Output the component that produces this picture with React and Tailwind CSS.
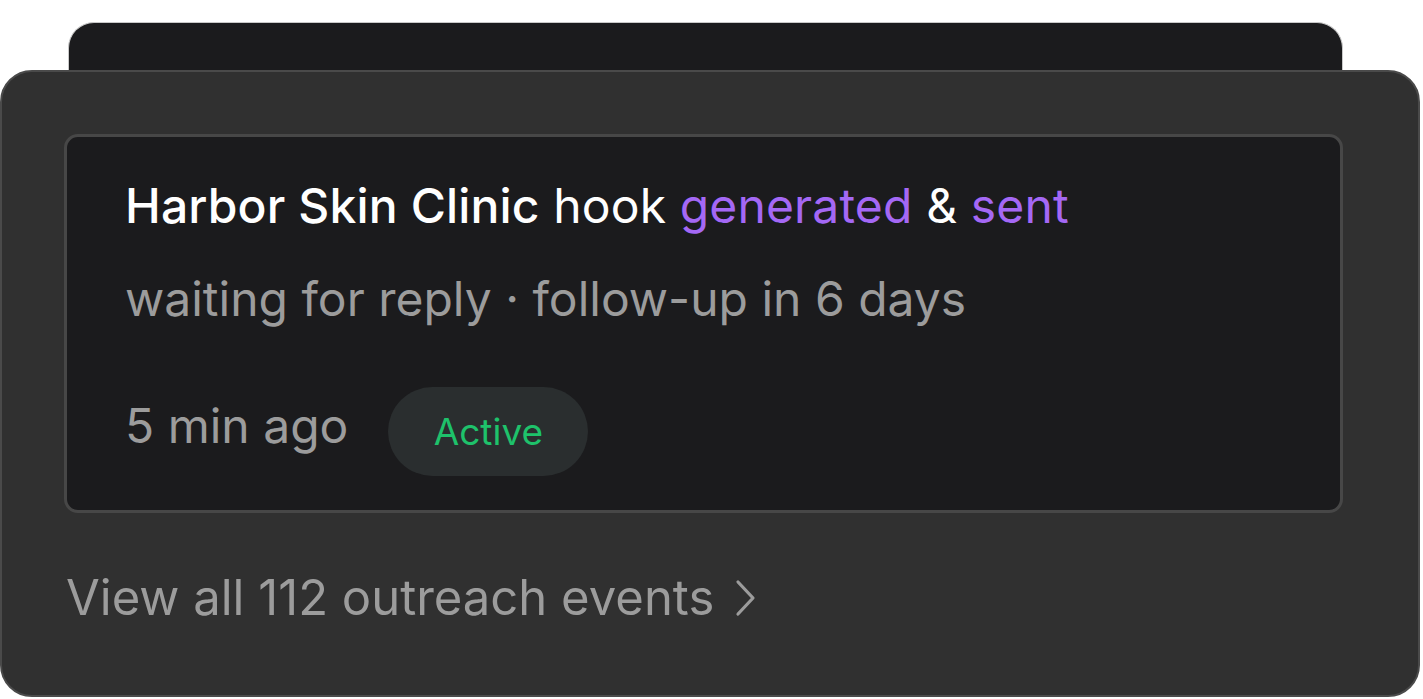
export default function App() {
    return (
        <div className="min-h-screen w-[1423px] bg-white pt-[22px] font-['Inter','Liberation_Sans',sans-serif]">
            <div className="ml-[68px] h-[48px] w-[1275px] rounded-t-[26px] border border-b-0 border-[#c9c9c9] bg-[#1b1b1d]" />

            <div className="h-[627px] w-[1420px] rounded-[32px] border-2 border-[#4a4a4a] bg-[#303030] px-[62px] pt-[62px]">
                <div className="h-[379px] w-[1279px] rounded-[14px] border-[3px] border-[#474747] bg-[#1b1b1d] pl-[58px] pt-[40px]">
                    <p className="text-[48px] leading-[58px] tracking-[0.003em] text-white">
                        <span className="font-medium">Harbor Skin Clinic</span> hook{" "}
                        <span className="text-[#a468f5]">generated</span> &amp;{" "}
                        <span className="text-[#a468f5]">sent</span>
                    </p>
                    <p className="mt-[35px] text-[48px] leading-[58px] text-[#9c9c9c]">
                        waiting for reply · follow-up in 6 days
                    </p>
                    <div className="mt-[59px] flex items-start gap-[40px]">
                        <span className="mt-[10px] text-[48px] leading-[58px] text-[#9c9c9c]">5 min ago</span>
                        <span className="flex h-[89px] w-[200px] items-center justify-center rounded-full bg-[#2a2e2f] text-[37px] text-[#1ec26b]">
                            Active
                        </span>
                    </div>
                </div>

                <div className="ml-[2px] mt-[56px] flex items-center gap-[21px] text-[49px] leading-[58px] text-[#9c9c9c]">
                    <span>View all 112 outreach events</span>
                    <svg width="22" height="38" viewBox="0 0 22 38" fill="none" stroke="#9c9c9c" strokeWidth="3.2" strokeLinecap="round" strokeLinejoin="round">
                        <path d="M3 3 L18 19 L3 35" />
                    </svg>
                </div>
            </div>
        </div>
    );
}
